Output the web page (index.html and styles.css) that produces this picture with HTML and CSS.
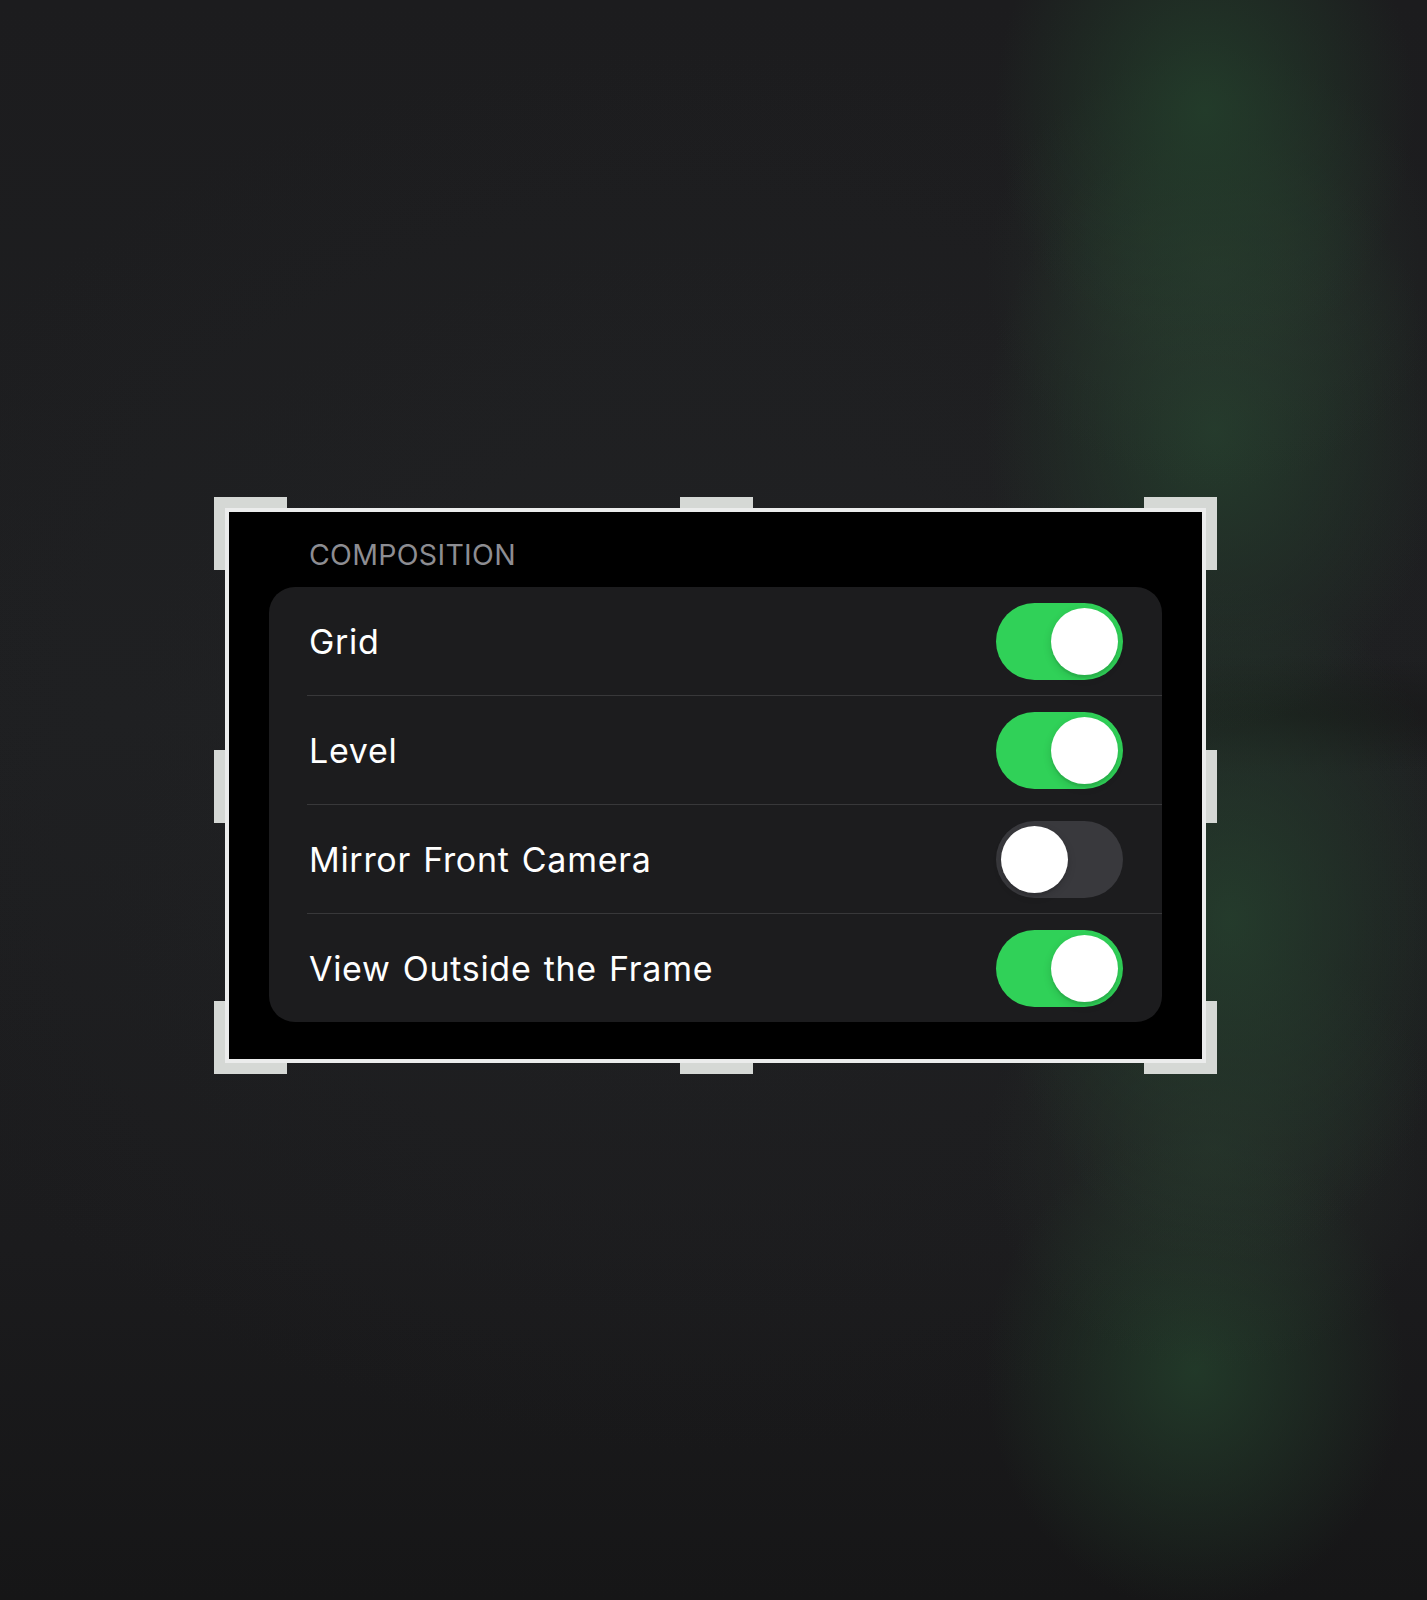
FILE: index.html
```html
<!DOCTYPE html>
<html lang="en">
<head>
<meta charset="utf-8">
<title>Composition</title>
<link rel="stylesheet" href="styles.css">
</head>
<body>
<div class="stage">
  <div class="crop">
    <span class="handle corner tl"></span>
    <span class="handle corner tr"></span>
    <span class="handle corner bl"></span>
    <span class="handle corner br"></span>
    <span class="handle edge-h top"></span>
    <span class="handle edge-h bottom"></span>
    <span class="handle edge-v left"></span>
    <span class="handle edge-v right"></span>

    <div class="section-header">COMPOSITION</div>
    <div class="group">
      <div class="row">
        <div class="row-body">
          <span class="label">Grid</span>
          <span class="switch on"><span class="knob"></span></span>
        </div>
      </div>
      <div class="row">
        <div class="row-body">
          <span class="label">Level</span>
          <span class="switch on"><span class="knob"></span></span>
        </div>
      </div>
      <div class="row">
        <div class="row-body">
          <span class="label">Mirror Front Camera</span>
          <span class="switch"><span class="knob"></span></span>
        </div>
      </div>
      <div class="row">
        <div class="row-body">
          <span class="label">View Outside the Frame</span>
          <span class="switch on"><span class="knob"></span></span>
        </div>
      </div>
    </div>
  </div>
</div>
</body>
</html>
```

FILE: styles.css
```css
* {
  box-sizing: border-box;
}

html, body {
  margin: 0;
  padding: 0;
  background: #1c1d1f;
}

/* blurred camera backdrop with green glows along the right side */
.stage {
  width: 1427px;
  height: 1600px;
  padding: 508px 0 0 225px;
  font-family: Inter, "Noto Sans", "Liberation Sans", sans-serif;
  background-color: #1d1e20;
  background-image:
    radial-gradient(ellipse 210px 260px at 1205px 110px, rgba(35, 62, 43, 0.9), rgba(35, 62, 43, 0) 100%),
    radial-gradient(ellipse 230px 220px at 1215px 270px, rgba(42, 58, 47, 0.65), rgba(42, 58, 47, 0) 100%),
    radial-gradient(ellipse 230px 300px at 1215px 430px, rgba(37, 62, 45, 0.9), rgba(37, 62, 45, 0) 100%),
    radial-gradient(ellipse 240px 340px at 1230px 920px, rgba(37, 62, 45, 0.9), rgba(37, 62, 45, 0) 100%),
    radial-gradient(ellipse 230px 220px at 1215px 1150px, rgba(42, 56, 46, 0.6), rgba(42, 56, 46, 0) 100%),
    radial-gradient(ellipse 210px 240px at 1195px 1370px, rgba(35, 62, 43, 0.85), rgba(35, 62, 43, 0) 100%),
    radial-gradient(ellipse 300px 60px at 1300px 715px, rgba(22, 22, 22, 0.85), rgba(22, 22, 22, 0) 100%),
    radial-gradient(ellipse 900px 700px at 700px 750px, rgba(34, 35, 37, 0.7), rgba(34, 35, 37, 0) 100%),
    linear-gradient(to bottom, #1c1c1e 0%, #1e1f21 45%, #1b1b1d 78%, #161617 100%);
}

/* crop frame */
.crop {
  position: relative;
  width: 981px;
  height: 555px;
  border: 4px solid #ebecec;
  background: #000;
}

.handle {
  position: absolute;
  border: 0 solid #d5d8d5;
}

.corner {
  width: 73px;
  height: 73px;
}

.corner.tl { top: -15px; left: -15px; border-top-width: 11px; border-left-width: 11px; }
.corner.tr { top: -15px; right: -15px; border-top-width: 11px; border-right-width: 11px; }
.corner.bl { bottom: -15px; left: -15px; border-bottom-width: 11px; border-left-width: 11px; }
.corner.br { bottom: -15px; right: -15px; border-bottom-width: 11px; border-right-width: 11px; }

.edge-h {
  width: 73px;
  height: 11px;
  left: calc(50% - 36px);
  background: #d5d8d5;
}
.edge-h.top { top: -15px; }
.edge-h.bottom { bottom: -15px; }

.edge-v {
  width: 11px;
  height: 73px;
  top: calc(50% - 36px);
  background: #d5d8d5;
}
.edge-v.left { left: -15px; }
.edge-v.right { right: -15px; }

/* settings section */
.section-header {
  height: 75px;
  padding: 28px 0 0 80px;
  font-size: 28.5px;
  line-height: 29px;
  letter-spacing: 0.3px;
  color: #8d8d92;
}

.group {
  margin: 0 40px;
  background: #1c1c1e;
  border-radius: 26px;
  overflow: hidden;
}

.row {
  padding-left: 38px;
}

.row-body {
  display: flex;
  align-items: center;
  justify-content: space-between;
  height: 108px;
  box-sizing: content-box;
  padding-right: 39px;
}

.row + .row .row-body {
  border-top: 1px solid #38383a;
}

.label {
  padding-left: 2px;
  font-size: 34px;
  letter-spacing: 0.7px;
  word-spacing: 2px;
  color: #ffffff;
}

/* iOS style switch */
.switch {
  display: flex;
  align-items: center;
  width: 127px;
  height: 77px;
  padding: 5px;
  border-radius: 39px;
  background: #39393d;
}

.switch.on {
  justify-content: flex-end;
  background: #30d158;
}

.knob {
  width: 67px;
  height: 67px;
  border-radius: 50%;
  background: #ffffff;
  box-shadow: 0 3px 8px rgba(0, 0, 0, 0.15), 0 3px 1px rgba(0, 0, 0, 0.06);
}
```
